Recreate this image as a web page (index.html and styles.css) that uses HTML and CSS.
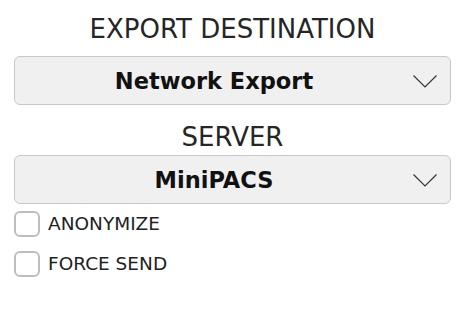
FILE: index.html
```html
<!DOCTYPE html>
<html lang="en">

<head>
    <meta charset="UTF-8">
    <meta name="viewport" content="width=device-width, initial-scale=1.0">
    <title>Export</title>
    <link rel="stylesheet" href="styles.css">
</head>

<body>
    <div class="container">
        <div class="label first">EXPORT DESTINATION</div>
        <div class="select">
            <span class="value">Network Export</span>
            <svg class="chevron" width="24" height="13" viewBox="0 0 24 13">
                <polyline points="0.5,0.5 12,12 23.5,0.5" fill="none" stroke="#333" stroke-width="1.2" />
            </svg>
        </div>
        <div class="label second">SERVER</div>
        <div class="select">
            <span class="value">MiniPACS</span>
            <svg class="chevron" width="24" height="13" viewBox="0 0 24 13">
                <polyline points="0.5,0.5 12,12 23.5,0.5" fill="none" stroke="#333" stroke-width="1.2" />
            </svg>
        </div>
        <div class="options">
            <label class="option"><span class="box"></span>ANONYMIZE</label>
            <label class="option"><span class="box"></span>FORCE SEND</label>
        </div>
    </div>
</body>

</html>
```

FILE: styles.css
```css
body,
html {
    margin: 0;
    padding: 0;
    background: #fff;
    color: #222;
    font-family: 'DejaVu Sans', sans-serif;
}

.container {
    padding: 0 6px 0 14px;
}

.label {
    text-align: center;
    font-size: 26px;
    line-height: 28px;
    color: #262626;
}

.label.first {
    margin-top: 15px;
    margin-bottom: 13px;
}

.label.second {
    margin-top: 18px;
    margin-bottom: 4px;
}

.select {
    display: flex;
    align-items: center;
    height: 47px;
    background: #f0f0f0;
    border: 1px solid #c8c8c8;
    border-radius: 6px;
}

.select .value {
    flex: 1;
    text-align: center;
    font-weight: bold;
    font-size: 22.5px;
    color: #111;
}

.chevron {
    margin-right: 13px;
    margin-top: 1px;
}

.options {
    margin-top: 7px;
    display: flex;
    flex-direction: column;
    gap: 14px;
}

.option {
    display: flex;
    align-items: center;
    gap: 8px;
    font-size: 18.5px;
    line-height: 26px;
}

.box {
    width: 22px;
    height: 22px;
    border: 2px solid #bdbdbd;
    border-radius: 6px;
}
```
